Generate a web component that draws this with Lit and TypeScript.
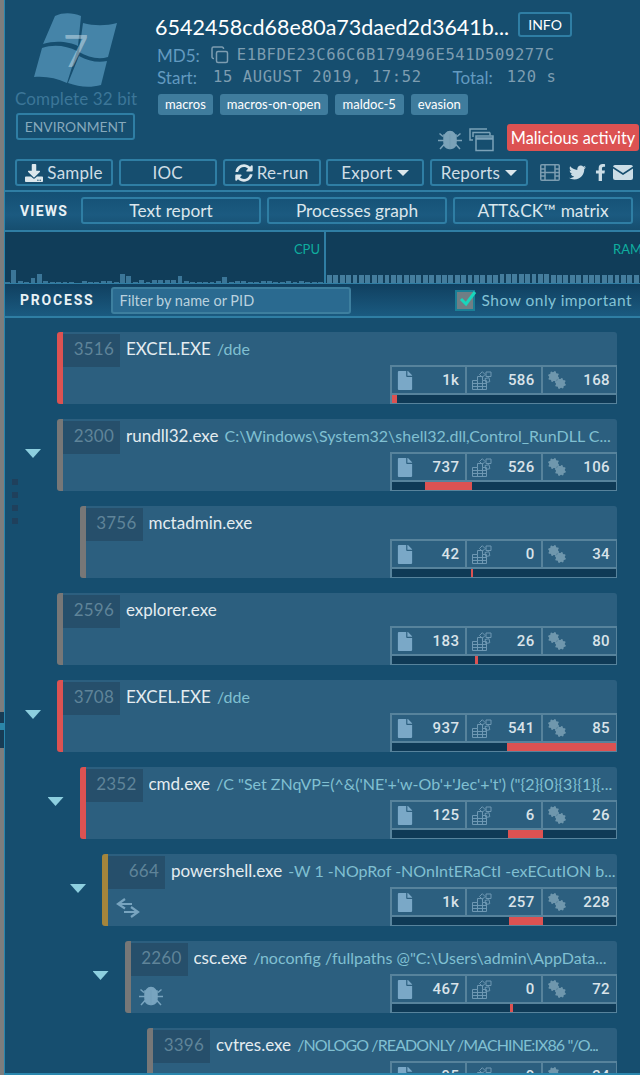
import { LitElement, html, css, svg } from "lit";
import { customElement } from "lit/decorators.js";

const gear = (cx: number, cy: number, r: number) => {
  const teeth = 8;
  let d = "";
  for (let i = 0; i < teeth * 4; i++) {
    const a = (i / (teeth * 4)) * Math.PI * 2 + 0.2;
    const rr = i % 4 < 2 ? r : r * 0.8;
    d += `${i ? "L" : "M"}${(cx + Math.cos(a) * rr).toFixed(2)} ${(cy + Math.sin(a) * rr).toFixed(2)}`;
  }
  return svg`<path d="${d}Z"/>`;
};

const fileIcon = html`<svg class="i-file" viewBox="0 0 384 512"><path d="M224 136V0H24C10.7 0 0 10.7 0 24v464c0 13.3 10.7 24 24 24h336c13.3 0 24-10.7 24-24V160H248c-13.2 0-24-10.8-24-24zm160-14.1v6.1H256V0h6.1c6.4 0 12.5 2.5 17 7l97.9 98c4.5 4.5 7 10.6 7 16.9z"/></svg>`;
const blocksIcon = html`<svg class="i-blocks" viewBox="0 0 20 19" stroke="currentColor" stroke-width="1"><path d="M.5 9.5h5v-4h5v4h4v9H.5zM.5 12.5h14M.5 15.5h14M5.5 9.5v9M10.5 9.5v9"/><path d="M7.5 3.5l2.800-2.800 2.800 2.800-2.800 2.800zM14 1h5v4.500h-5zM13 7.500l4-.8.800 4-4 .8z"/></svg>`;
const cogsIcon = html`<svg class="i-cogs" viewBox="0 0 18 18">${gear(5.6, 5.6, 5.6)}${gear(12.4, 12.4, 5.6)}</svg>`;
const bugPath = svg`<path d="M8 5.500a5 5 0 0 1 8 0zM6 7h5.200v13.500C8 20.200 6 18 6 14.500zM12.800 7H18v7.500c0 3.500-2 5.700-5.200 6zM5 8.500 1.500 5.500M19 8.500l3.500-3M5.500 12.500H0M18.500 12.500H24M6 16.500l-4 4.500M18 16.500l4 4.500" stroke="currentColor" stroke-width="1.500" fill="currentColor"/>`;
const bugIcon = (cls: string) => html`<svg class=${cls} viewBox="0 0 24 22">${bugPath}</svg>`;

const cpu = [1,13,2,1,5,9,2,1,1,1,1,0,2,1,1,2,2,1,9,7,1,3,1,3,3,3,3,7,2,1,1,1,1,2,6,1,2,2,1,1,2,2,1,1,2,1,2,1,1,1];
const ram = Array.from({ length: 49 }, (_, i) => (i >= 27 && i <= 34 ? 9 : 8));

interface Proc {
  pid: string; name: string; args: string; level: number; color: string; tw?: boolean;
  files: string; reg: string; mods: string; seg?: [number, number]; badge?: string; squeeze?: number;
}
const procs: Proc[] = [
  { pid: "3516", name: "EXCEL.EXE", args: "/dde", level: 0, color: "red", files: "1k", reg: "586", mods: "168", seg: [0, 5] },
  { pid: "2300", name: "rundll32.exe", args: "C:\\Windows\\System32\\shell32.dll,Control_RunDLL C...", level: 0, color: "gray", tw: true, files: "737", reg: "526", mods: "106", seg: [33, 47] },
  { pid: "3756", name: "mctadmin.exe", args: "", level: 1, color: "gray", files: "42", reg: "0", mods: "34", seg: [79, 2] },
  { pid: "2596", name: "explorer.exe", args: "", level: 0, color: "gray", files: "183", reg: "26", mods: "80", seg: [83, 3] },
  { pid: "3708", name: "EXCEL.EXE", args: "/dde", level: 0, color: "red", tw: true, files: "937", reg: "541", mods: "85", seg: [115, 109] },
  { pid: "2352", name: "cmd.exe", args: "/C \"Set ZNqVP=(^&('NE'+'w-Ob'+'Jec'+'t') (\"{2}{0}{3}{1}{...", level: 1, color: "red", tw: true, files: "125", reg: "6", mods: "26", seg: [116, 35] },
  { pid: "664", name: "powershell.exe", args: "-W 1 -NOpRof -NOnIntERaCtI -exECutION b...", level: 2, color: "gold", tw: true, badge: "arrows", files: "1k", reg: "257", mods: "228", seg: [117, 34] },
  { pid: "2260", name: "csc.exe", args: "/noconfig /fullpaths @\"C:\\Users\\admin\\AppData...", level: 3, color: "gray", tw: true, badge: "bug", files: "467", reg: "0", mods: "72", seg: [118, 3] },
  { pid: "3396", name: "cvtres.exe", args: "/NOLOGO /READONLY /MACHINE:IX86 \"/O...", level: 4, color: "gray", files: "95", reg: "0", mods: "34", squeeze: -0.9 },
];

@customElement("app-root")
export class AppRoot extends LitElement {
  static styles = css`
    :host { display: block; position: relative; width: 640px; height: 1075px; overflow: hidden; background: #7d7d7d; font-family: "Lato", "Noto Sans", sans-serif; }
    * { box-sizing: border-box; }
    svg { display: block; fill: currentColor; }
    .strip { position: absolute; left: 0; top: 712px; width: 4px; height: 36px; background: linear-gradient(#173c55 0 30%, #2b86a8 30% 50%, #173c55 50% 100%); }
    .page { margin-left: 4px; width: 636px; height: 1075px; overflow: hidden; background: #164e6f; border-left: 1px solid #2a86ad; border-bottom: 2px solid #2a86ad; display: flex; flex-direction: column; }

    .head { height: 155px; display: flex; flex: none; }
    .env { width: 150px; flex: none; display: flex; flex-direction: column; padding-top: 13px; padding-left: 10px; position: relative; }
    .logo { width: 86px; height: 76px; margin-left: 19px; color: #4584a8; position: relative; }
    .logo svg { width: 86px; height: 76px; }
    .seven { position: absolute; left: 29px; top: 12px; font: 400 44px/50px "Lato", sans-serif; color: rgba(255,255,255,.4); }
    .env-name { font-size: 17px; line-height: 22px; color: #3c7698; margin-top: -1px; letter-spacing: .12px; white-space: nowrap; }
    .env-btn { width: 119px; height: 27px; margin: 3px 0 0 1px; border: 2px solid #2f7ea4; border-radius: 3px; color: #86a9bc; font-size: 13.8px; display: flex; align-items: center; justify-content: center; }

    .info { flex: 1; display: flex; flex-direction: column; min-width: 0; position: relative; }
    .title-row { display: flex; height: 44px; align-items: flex-start; }
    .title { font-size: 21.5px; line-height: 30px; color: #fff; margin-top: 12px; white-space: nowrap; }
    .info-btn { width: 54px; height: 25px; margin: 12px 0 0 9px; border: 2px solid #2f7ea4; border-radius: 3px; color: #fff; font-size: 14px; display: flex; align-items: center; justify-content: center; }
    .meta { display: flex; align-items: center; height: 22px; color: #629ac0; font-size: 17px; white-space: nowrap; padding-left: 2px; }
    .mono { font-family: "DejaVu Sans Mono", monospace; color: #7d9db1; font-size: 15.5px; letter-spacing: .6px; }
    .meta svg { width: 18px; height: 18px; color: #7d9db1; margin: 0 8px 0 11px; fill: none; }
    .lab-start { width: 56px; }
    .total { margin-left: 31px; margin-right: 14px; }
    .tags { display: flex; gap: 7px; margin-top: 6px; padding-left: 3px; }
    .tag { height: 21px; padding: 0 7px; border-radius: 3px; background: #3f7c9d; color: #fff; font-size: 13px; line-height: 21px; white-space: nowrap; text-align: center; }
    .tag:nth-child(3) { min-width: 69px; }
    .verdict { display: flex; justify-content: flex-end; align-items: center; height: 28px; margin-top: 8px; }
    .i-bug-head { width: 24px; height: 22px; color: #7ba2b8; margin-right: 7px; margin-top: 4px; }
    .i-win { width: 25px; height: 24px; color: #7ba2b8; margin-right: 13px; margin-top: 5px; fill: none; }
    .mal { width: 132px; height: 27px; background: #dc5252; border-radius: 3px; color: #fff; font-size: 16.3px; display: flex; align-items: center; justify-content: center; white-space: nowrap; margin-right: 1px; }

    .tools { height: 37px; flex: none; display: flex; gap: 5.75px; padding: 4px 0 0 10px; border-bottom: 2px solid #2f7ea4; }
    .tbtn { width: 98px; height: 27px; border: 2px solid #2f7ea4; border-radius: 3px; color: #cfdde5; font-size: 17px; letter-spacing: .2px; display: flex; align-items: center; justify-content: center; gap: 4px; white-space: nowrap; }
    .tbtn svg { width: 18px; height: 18px; color: #dce7ec; }
    .caret { width: 0; height: 0; border-left: 6px solid transparent; border-right: 6px solid transparent; border-top: 6px solid #dce7ec; margin-left: 1px; }
    .socials { display: flex; align-items: center; gap: 7px; margin-left: 6px; padding-bottom: 4px; color: #cbdde6; }
    .socials .film { width: 20px; height: 17px; color: #7c9db1; margin-right: 2px; fill: none; }
    .socials .tw { width: 17px; height: 17px; margin-right: 2px; }
    .socials .fb { width: 11px; height: 17px; }
    .socials .mail { width: 20px; height: 15px; }

    .views { height: 40px; flex: none; display: flex; align-items: flex-start; padding: 5px 0 0 15px; background: linear-gradient(#145074, #1b5a80 60%, #164e6f); border-bottom: 2px solid #2f7ea4; }
    .views .cap { line-height: 28px; }
    .cap { font: 700 14px "Roboto", sans-serif; color: #e8f1f5; letter-spacing: 1.2px; white-space: nowrap; }
    .filter .cap { letter-spacing: 1.8px; }
    .vbtns { display: flex; gap: 6px; margin-left: 13px; }
    .vbtn { width: 180px; height: 27px; border: 2px solid #2f7ea4; border-radius: 3px; color: #dbe6ec; font-size: 17.3px; display: flex; align-items: center; justify-content: center; white-space: nowrap; }

    .charts { height: 52px; flex: none; display: flex; background: #103d59; border-bottom: 1px solid #2f7ea4; }
    .chart { position: relative; display: flex; align-items: flex-end; gap: 1.5px; height: 100%; overflow: hidden; }
    .chart.c { width: 319px; }
    .chart.r { flex: 1; border-left: 2px solid #2f7ea4; padding-left: 1px; }
    .bar { width: 4.9px; flex: none; background: #3b7698; }
    .chart.r .bar { background: #447d9d; }
    .clabel { position: absolute; top: 9px; font-size: 13px; line-height: 16px; color: #0fae9f; }
    .c .clabel { right: 4px; }
    .r .clabel { left: 287px; }

    .filter { height: 34px; flex: none; display: flex; align-items: center; padding-left: 15px; background: linear-gradient(#104060, #1a5a80); border-bottom: 2px solid #2f7ea4; }
    .finput { width: 240px; height: 27px; margin-left: 16px; background: #2a6a90; border: 2px solid #3d7f9f; border-radius: 3px; color: #b9d1de; font-size: 14.5px; display: flex; align-items: center; padding-left: 7px; }
    .check { width: 20px; height: 21px; margin-left: 104px; background: #6f7f85; border: 2px solid #1b7f96; position: relative; }
    .check svg { position: absolute; left: 1px; top: -3px; width: 19px; height: 19px; color: #19d6bc; fill: none; stroke: currentColor; stroke-width: 3; }
    .flabel { margin-left: 7px; color: #83c3d6; font-size: 15.5px; letter-spacing: .5px; white-space: nowrap; }

    .list { flex: 1; min-height: 0; overflow: hidden; padding-top: 14px; display: flex; flex-direction: column; gap: 15px; }
    .row { display: flex; align-items: center; flex: none; padding-right: 23px; position: relative; }
    .grip { position: absolute; left: 7px; top: 60px; display: flex; flex-direction: column; gap: 7px; z-index: 1; }
    .grip i { display: block; width: 6px; height: 6px; background: #1f405c; }
    .twisty { flex: none; width: 16px; height: 9px; margin: 0 16px 3px 0; background: #8dcfdf; clip-path: polygon(0 0, 100% 0, 50% 100%); }
    .spacer { flex: none; width: 32px; }
    .card { flex: 1; min-width: 0; height: 72px; background: #2c5f7f; border-radius: 3px; display: flex; flex-direction: column; border-left: 6px solid #777; }
    .card.red { border-left-color: #dc5252; }
    .card.gold { border-left-color: #a4853c; }
    .top { display: flex; height: 33px; flex: none; margin-top: 2px; align-items: flex-start; }
    .pid { width: 57px; height: 33px; flex: none; background: #264f6b; color: #5f8499; font-size: 17px; line-height: 30px; text-align: right; padding-right: 6px; letter-spacing: .2px; }
    .cmd { margin-left: 6px; white-space: nowrap; overflow: hidden; line-height: 29px; min-width: 0; }
    .pname { color: #e4ecf0; font-size: 17px; }
    .args { color: #80c0d2; font-size: 16px; margin-left: 2px; }
    .bottom { flex: 1; display: flex; justify-content: space-between; align-items: flex-end; min-height: 0; margin-top: -3px; }
    .badge { width: 26px; height: 24px; margin: 0 0 5px 8px; color: #78a4bf; }
    .badge svg { width: 24px; height: 22px; }
    .badge svg.ar { fill: none; stroke: currentColor; stroke-width: 2.2; }
    .stats { margin-left: auto; width: 227px; height: 39px; border: 2px solid #57839c; border-right-width: 1px; border-bottom-width: 1px; display: flex; flex-direction: column; flex: none; }
    .cells { display: flex; height: 28px; flex: none; border-bottom: 2px solid #57839c; }
    .cell { flex: 1; display: flex; align-items: center; justify-content: space-between; padding: 0 6px 0 5px; border-left: 2px solid #57839c; color: #d9e3e9; font: 500 15px "Roboto", sans-serif; letter-spacing: .4px; }
    .cell:first-child { border-left: 0; }
    .i-file { width: 16px; height: 19px; color: #7aa8c7; }
    .i-blocks { width: 20px; height: 19px; color: #6e98b3; fill: none; }
    .i-cogs { width: 18px; height: 18px; color: #6f97ad; }
    .track { flex: 1; background: #0f3a56; position: relative; }
    .seg { position: absolute; top: 0; bottom: 0; background: #dc5252; }
  `;

  private stat(icon: unknown, v: string) {
    return html`<div class="cell">${icon}<span>${v}</span></div>`;
  }

  private renderRow(p: Proc, i: number) {
    const pad = 20 + p.level * 22.5;
    return html`<div class="row" style="padding-left:${pad}px">
      ${i === 1 ? html`<div class="grip"><i></i><i></i><i></i><i></i></div>` : ""}
      ${p.tw ? html`<div class="twisty"></div>` : html`<div class="spacer"></div>`}
      <div class="card ${p.color}">
        <div class="top">
          <div class="pid">${p.pid}</div>
          <div class="cmd"><span class="pname">${p.name}</span> <span class="args" style=${p.squeeze ? `letter-spacing:${p.squeeze}px` : ""}>${p.args}</span></div>
        </div>
        <div class="bottom">
          ${p.badge === "arrows"
            ? html`<div class="badge"><svg class="ar" viewBox="0 0 24 22"><path d="M9 2 2 7l7 4.500M2 7h14M15 10l7 5-7 5M22 15H8"/></svg></div>`
            : p.badge === "bug"
              ? html`<div class="badge">${bugIcon("")}</div>`
              : ""}
          <div class="stats">
            <div class="cells">
              ${this.stat(fileIcon, p.files)}${this.stat(blocksIcon, p.reg)}${this.stat(cogsIcon, p.mods)}
            </div>
            <div class="track">
              ${p.seg ? html`<div class="seg" style="left:${p.seg[0]}px;width:${p.seg[1]}px"></div>` : ""}
            </div>
          </div>
        </div>
      </div>
    </div>`;
  }

  render() {
    return html`<div class="strip"></div><div class="page">
      <div class="head">
        <div class="env">
          <div class="logo">
            <svg viewBox="0 0 86 76">
              <path d="M21 3C30-1 39 0 47 3L44 33C36 29 22 27 9 31z"/>
              <path d="M49 10C60 13 72 13 83 10L74 44C64 47 54 44 45 39z"/>
              <path d="M8 35C20 31 33 33 43 38L33 70C22 65 12 63 0 64z"/>
              <path d="M45 43C54 48 64 50 73 48L67 72C56 75 45 74 34 70z"/>
            </svg>
            <div class="seven">7</div>
          </div>
          <div class="env-name">Complete 32 bit</div>
          <div class="env-btn">ENVIRONMENT</div>
        </div>
        <div class="info">
          <div class="title-row">
            <div class="title">6542458cd68e80a73daed2d3641b...</div>
            <div class="info-btn">INFO</div>
          </div>
          <div class="meta">MD5:
            <svg viewBox="0 0 18 18" stroke="currentColor" stroke-width="1.5"><rect x="5.5" y="5.5" width="11" height="11" rx="1.5"/><path d="M3 12.5H2.5A1.5 1.5 0 0 1 1 11V2.5A1.5 1.5 0 0 1 2.5 1H11a1.5 1.5 0 0 1 1.5 1.5V3"/></svg>
            <span class="mono">E1BFDE23C66C6B179496E541D509277C</span>
          </div>
          <div class="meta"><span class="lab-start">Start:</span>
            <span class="mono">15 AUGUST 2019, 17:52</span>
            <span class="total">Total:</span>
            <span class="mono">120 s</span>
          </div>
          <div class="tags">
            <span class="tag">macros</span><span class="tag">macros-on-open</span><span class="tag">maldoc-5</span><span class="tag">evasion</span>
          </div>
          <div class="verdict">
            ${bugIcon("i-bug-head")}
            <svg class="i-win" viewBox="0 0 25 24" stroke="currentColor" stroke-width="1.5"><path d="M1 6V1h17M1 4v8h3M4 9V4.5h17M21 4.5v3"/><rect x="7" y="8" width="17" height="14.5"/><path d="M7 10.5h17" stroke-width="2.5"/></svg>
            <div class="mal">Malicious activity</div>
          </div>
        </div>
      </div>

      <div class="tools">
        <div class="tbtn"><svg viewBox="0 0 512 512"><path d="M216 0h80c13.3 0 24 10.7 24 24v168h87.7c17.8 0 26.7 21.5 14.1 34.1L269.7 378.3c-7.5 7.5-19.8 7.5-27.3 0L90.1 226.1c-12.6-12.6-3.7-34.1 14.1-34.1H192V24c0-13.3 10.7-24 24-24zm296 376v112c0 13.3-10.7 24-24 24H24c-13.3 0-24-10.7-24-24V376c0-13.3 10.7-24 24-24h146.7l49 49c20.1 20.1 52.5 20.1 72.6 0l49-49H488c13.3 0 24 10.7 24 24zm-124 88c0-11-9-20-20-20s-20 9-20 20 9 20 20 20 20-9 20-20zm64 0c0-11-9-20-20-20s-20 9-20 20 9 20 20 20 20-9 20-20z"/></svg>Sample</div>
        <div class="tbtn">IOC</div>
        <div class="tbtn"><svg viewBox="0 0 512 512"><path d="M370.72 133.28C339.458 104.008 298.888 87.962 255.848 88c-77.458.068-144.328 53.178-162.791 126.85-1.344 5.363-6.122 9.15-11.651 9.15H24.103c-7.498 0-13.194-6.807-11.807-14.176C33.933 94.924 134.813 8 256 8c66.448 0 126.791 26.136 171.315 68.685L463.03 40.97C478.149 25.851 504 36.559 504 57.941V192c0 13.255-10.745 24-24 24H345.941c-21.382 0-32.09-25.851-16.971-40.971l41.75-41.749zM32 296h134.059c21.382 0 32.09 25.851 16.971 40.971l-41.75 41.75c31.262 29.273 71.835 45.319 114.876 45.28 77.418-.07 144.315-53.144 162.787-126.849 1.344-5.363 6.122-9.15 11.651-9.15h57.304c7.498 0 13.194 6.807 11.807 14.176C478.067 417.076 377.187 504 256 504c-66.448 0-126.791-26.136-171.315-68.685L48.97 471.03C33.851 486.149 8 475.441 8 454.059V320c0-13.255 10.745-24 24-24z"/></svg>Re-run</div>
        <div class="tbtn">Export<span class="caret"></span></div>
        <div class="tbtn">Reports<span class="caret"></span></div>
        <div class="socials">
          <svg class="film" viewBox="0 0 20 17" stroke="currentColor" stroke-width="1.5"><rect x=".75" y=".75" width="18.5" height="15.5" rx="1"/><path d="M5 1v15M15 1v15M1 5h4M1 8.5h4M1 12h4M15 5h4M15 8.5h4M15 12h4M5 8.5h10"/></svg>
          <svg class="tw" viewBox="0 0 512 512"><path d="M459.37 151.716c.325 4.548.325 9.097.325 13.645 0 138.72-105.583 298.558-298.558 298.558-59.452 0-114.68-17.219-161.137-47.106 8.447.974 16.568 1.299 25.34 1.299 49.055 0 94.213-16.568 130.274-44.832-46.132-.975-84.792-31.188-98.112-72.772 6.498.974 12.995 1.624 19.818 1.624 9.421 0 18.843-1.3 27.614-3.573-48.081-9.747-84.143-51.98-84.143-102.985v-1.299c13.969 7.797 30.214 12.67 47.431 13.319-28.264-18.843-46.781-51.005-46.781-87.391 0-19.492 5.197-37.36 14.294-52.954 51.655 63.675 129.3 105.258 216.365 109.807-1.624-7.797-2.599-15.918-2.599-24.04 0-57.828 46.782-104.934 104.934-104.934 30.213 0 57.502 12.67 76.67 33.137 23.715-4.548 46.456-13.32 66.599-25.34-7.798 24.366-24.366 44.833-46.132 57.827 21.117-2.273 41.584-8.122 60.426-16.243-14.292 20.791-32.161 39.308-52.628 54.253z"/></svg>
          <svg class="fb" viewBox="0 0 320 512"><path d="M279.14 288l14.22-92.66h-88.91v-60.13c0-25.35 12.42-50.06 52.24-50.06h40.42V6.26S260.43 0 225.36 0c-73.22 0-121.08 44.38-121.08 124.72v70.62H22.89V288h81.39v224h100.17V288z"/></svg>
          <svg class="mail" viewBox="0 0 19 15" preserveAspectRatio="none"><path d="M2 0h15a2 2 0 0 1 2 1.5L9.5 8 0 1.5A2 2 0 0 1 2 0zM0 3.5l9.5 6.500L19 3.5V13a2 2 0 0 1-2 2H2a2 2 0 0 1-2-2z"/></svg>
        </div>
      </div>

      <div class="views">
        <span class="cap">VIEWS</span>
        <div class="vbtns">
          <div class="vbtn">Text report</div>
          <div class="vbtn">Processes graph</div>
          <div class="vbtn">ATT&amp;CK™ matrix</div>
        </div>
      </div>

      <div class="charts">
        <div class="chart c">
          ${cpu.map((h) => html`<div class="bar" style="height:${h}px"></div>`)}
          <span class="clabel">CPU</span>
        </div>
        <div class="chart r">
          ${ram.map((h) => html`<div class="bar" style="height:${h}px"></div>`)}
          <span class="clabel">RAM</span>
        </div>
      </div>

      <div class="filter">
        <span class="cap">PROCESS</span>
        <div class="finput">Filter by name or PID</div>
        <div class="check"><svg viewBox="0 0 19 19"><path d="M3 10l5 5 9-12"/></svg></div>
        <span class="flabel">Show only important</span>
      </div>

      <div class="list">
        ${procs.map((p, i) => this.renderRow(p, i))}
      </div>
    </div>`;
  }
}
